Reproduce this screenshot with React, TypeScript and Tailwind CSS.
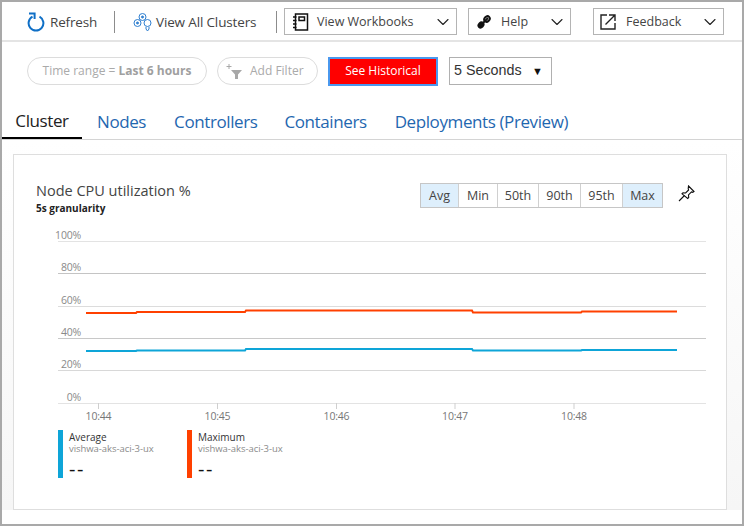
import { ChevronDown } from "lucide-react";

const FONT = "font-['Open_Sans','Noto_Sans',sans-serif]";

const GRID = [
  { label: "100%", y: 241, color: "#e3e3e3" },
  { label: "80%", y: 273, color: "#c4c4c4" },
  { label: "60%", y: 306, color: "#dcdcdc" },
  { label: "40%", y: 338, color: "#c8c8c8" },
  { label: "20%", y: 370, color: "#d8d8d8" },
  { label: "0%", y: 403, color: "#e3e3e3" },
];

const TICKS = [
  { label: "10:44", x: 98.5 },
  { label: "10:45", x: 217.5 },
  { label: "10:46", x: 336.5 },
  { label: "10:47", x: 455 },
  { label: "10:48", x: 574 },
];

const RED_LINE =
  "86,313 136,313 137,312 245,312 246,310.5 472,310.5 473,312.5 581,312.5 582,311.5 677,311.5";
const BLUE_LINE =
  "86,351 136,351 137,350.5 245,350.5 246,349 472,349 473,350.5 581,350.5 582,350 677,350";

const STATS = [
  { label: "Avg", active: true, width: "w-[38px]" },
  { label: "Min", active: false, width: "w-[39px]" },
  { label: "50th", active: false, width: "w-[41px]" },
  { label: "90th", active: false, width: "w-[42px]" },
  { label: "95th", active: false, width: "w-[42px]" },
  { label: "Max", active: true, width: "w-[39px]" },
];

const TABS = [
  { label: "Nodes", className: "ml-[15px]" },
  { label: "Controllers", className: "ml-[28px]" },
  { label: "Containers", className: "ml-[27px]" },
  { label: "Deployments (Preview)", className: "ml-[28px]" },
];

function RefreshIcon() {
  return (
    <svg width="18" height="20" viewBox="0 0 18 20" fill="none">
      <path d="M5.5 4.6A7.4 7.4 0 1 0 12.5 4.6" stroke="#0f6fc6" strokeWidth="2" />
      <path d="M2 1.5h5.6v5.6" stroke="#0f6fc6" strokeWidth="2" />
    </svg>
  );
}

function ClustersIcon() {
  return (
    <svg width="19" height="20" viewBox="0 0 19 20" fill="none" stroke="#2f7fd0" strokeWidth="1">
      <circle cx="9.5" cy="5" r="3.5" />
      <circle cx="4.5" cy="11" r="3.5" />
      <circle cx="14.5" cy="11" r="3.5" />
      <circle cx="9.5" cy="5" r="1" fill="#2f7fd0" />
      <circle cx="4.5" cy="11" r="1" fill="#2f7fd0" />
      <path d="M13 15v2l1.5 2 1.5-2v-2" />
    </svg>
  );
}

function WorkbookIcon() {
  return (
    <svg width="17" height="18" viewBox="0 0 17 18" fill="none" stroke="#111" strokeWidth="1.5">
      <path d="M3.5 1h12v16h-12z" />
      <path d="M7 4h5.5v3.5H7z" />
      <path d="M1 4h3.5M1 7.5h3.5M1 11h3.5M1 14.5h3.5" />
    </svg>
  );
}

function HelpIcon() {
  return (
    <svg width="14" height="14" viewBox="0 0 14 14" fill="none" stroke="#111">
      <path d="M3 11l8-8" strokeWidth="2" />
      <ellipse cx="10" cy="4" rx="3" ry="2.4" transform="rotate(-45 10 4)" strokeWidth="2" />
      <ellipse cx="4" cy="10" rx="3" ry="2.4" transform="rotate(-45 4 10)" fill="#111" strokeWidth="1.5" />
    </svg>
  );
}

function FeedbackIcon() {
  return (
    <svg width="16" height="16" viewBox="0 0 16 16" fill="none" stroke="#222" strokeWidth="1.4">
      <path d="M7 1H1v14h14V9" />
      <path d="M5.5 10.5L14.5 1.5M9 1h6v6" />
    </svg>
  );
}

function FilterIcon() {
  return (
    <svg width="17" height="17" viewBox="0 0 17 17" fill="#a8a8a8">
      <path d="M5 7h11l-4 4.4V16h-3v-4.6z" />
      <path d="M3 1v5M0.5 3.5h5" stroke="#a8a8a8" fill="none" />
    </svg>
  );
}

function PinIcon() {
  return (
    <svg width="17" height="17" viewBox="0 0 17 17" fill="none" stroke="#111" strokeWidth="1.1">
      <path d="M10.5 1L16 6.5l-1.2.8-1.3-.4-3 3 .2 2.6-1 1L4 8.8l1-1 2.6.2 3-3-.4-1.3z" />
      <path d="M6.5 10.5L1 16" />
    </svg>
  );
}

function Dropdown({
  icon,
  label,
  className,
  labelClass,
}: {
  icon: React.ReactNode;
  label: string;
  className: string;
  labelClass: string;
}) {
  return (
    <div className={`flex h-[27px] items-center border border-[#b4b4b4] pr-[3px] ${className}`}>
      {icon}
      <span className={`pt-[2px] text-[12.5px] text-[#444] ${labelClass}`}>{label}</span>
      <ChevronDown size={20} strokeWidth={1.3} className="ml-auto text-[#222]" />
    </div>
  );
}

function Chart() {
  return (
    <svg width="712" height="200" viewBox="14 226 712 200" className="block">
      {GRID.map((g) => (
        <g key={g.label}>
          <line x1="58" x2="706" y1={g.y + 0.5} y2={g.y + 0.5} stroke={g.color} />
          <text x="81" y={g.y - 2} textAnchor="end" fontSize="10.5" letterSpacing="-0.2" fill="#8a8a8a">
            {g.label}
          </text>
        </g>
      ))}
      {TICKS.map((t) => (
        <g key={t.label}>
          <line x1={t.x} x2={t.x} y1="403" y2="409" stroke="#cfcfcf" />
          <text x={t.x} y="420" textAnchor="middle" fontSize="10.5" letterSpacing="-0.2" fill="#777">
            {t.label}
          </text>
        </g>
      ))}
      <polyline points={RED_LINE} fill="none" stroke="#ff4000" strokeWidth="2" />
      <polyline points={BLUE_LINE} fill="none" stroke="#0ea5d8" strokeWidth="2" />
    </svg>
  );
}

function LegendItem({ color, title }: { color: string; title: string }) {
  return (
    <div className="flex h-[48px] w-[129px]">
      <div className={`h-full w-[5px] ${color}`} />
      <div className="ml-[6px] flex flex-col pt-[1px]">
        <span className="text-[10px] leading-[12px] text-[#333]">{title}</span>
        <span className="whitespace-nowrap text-[9.5px] leading-[11px] tracking-[-0.05px] text-[#8a8a8a]">
          vishwa-aks-aci-3-ux
        </span>
        <span className="mt-[4px] text-[20px] leading-[22px] tracking-[1.5px] text-[#111]">--</span>
      </div>
    </div>
  );
}

export default function App() {
  return (
    <div className={`h-[526px] w-[744px] overflow-hidden border-2 border-[#a9a9a9] bg-white ${FONT}`}>
      {/* Toolbar */}
      <div className="flex h-[40px] items-center border-b-2 border-[#e4e4e4] pl-[25px] pt-[1px]">
        <RefreshIcon />
        <span className="ml-[5px] w-[64px] pt-[1px] text-[13.5px] tracking-[-0.15px] text-[#444]">Refresh</span>
        <div className="h-[22px] w-px bg-[#8c8c8c]" />
        <div className="ml-[18px]">
          <ClustersIcon />
        </div>
        <span className="ml-[4px] w-[120px] pt-[1px] text-[13.5px] tracking-[-0.15px] text-[#444]">
          View All Clusters
        </span>
        <div className="h-[22px] w-px bg-[#8c8c8c]" />
        <Dropdown
          icon={<WorkbookIcon />}
          label="View Workbooks"
          className="ml-[7px] w-[173px] pl-[7px]"
          labelClass="ml-[8px]"
        />
        <Dropdown
          icon={<HelpIcon />}
          label="Help"
          className="ml-[11px] w-[103px] pl-[8px]"
          labelClass="ml-[10px]"
        />
        <Dropdown
          icon={<FeedbackIcon />}
          label="Feedback"
          className="ml-[22px] w-[131px] pl-[6px]"
          labelClass="ml-[10px]"
        />
      </div>

      {/* Filters */}
      <div className="flex h-[60px] items-center pb-[2px] pl-[25px]">
        <div className="flex h-[28px] w-[180px] items-center justify-center rounded-full border border-[#dcdcdc] text-[12px] text-[#aaa]">
          <span>Time range =&nbsp;</span>
          <span className="font-bold text-[#a0a0a0]">Last 6 hours</span>
        </div>
        <div className="ml-[10px] flex h-[28px] w-[101px] items-center rounded-full border border-[#dcdcdc] pl-[8px] text-[12px] text-[#aaa]">
          <FilterIcon />
          <span className="ml-[7px]">Add Filter</span>
        </div>
        <button className="ml-[10px] h-[29px] w-[110px] border-2 border-[#4a98ee] bg-[#ff0000] text-[12px] text-white">
          See Historical
        </button>
        <div className="ml-[11px] flex h-[28px] w-[103px] items-center justify-between border border-[#b0b0b0] pl-[4px] pr-[8px] text-[14.3px] text-[#333]">
          <span className="font-['Liberation_Sans',sans-serif]">5 Seconds</span>
          <span className="text-[11px] text-[#111]">▼</span>
        </div>
      </div>

      {/* Tabs */}
      <div className="flex h-[38px] border-b border-[#d4d4d4] text-[17px] tracking-[-0.4px]">
        <div className="flex w-[80px] items-center justify-center border-b-2 border-black pt-[2px] text-[#222]">
          Cluster
        </div>
        <div className="flex items-center pt-[2px] text-[#1f67b0]">
          {TABS.map((t) => (
            <span key={t.label} className={t.className}>
              {t.label}
            </span>
          ))}
        </div>
      </div>

      {/* Card */}
      <div className="h-[370px] bg-gradient-to-b from-white to-[#f6f6f6] pl-[11px] pr-[15px] pt-[14px]">
        <div className="h-[356px] border border-[#dedede] bg-white">
          <div className="flex h-[71px] pl-[22px] pt-[26px]">
            <div>
              <div className="text-[14.5px] leading-[20px] text-[#444]">Node CPU utilization %</div>
              <div className="text-[10px] font-bold leading-[14px] text-[#222]">5s granularity</div>
            </div>
            <div className="ml-auto mr-[31px] flex items-start">
              <div className="mt-[2px] flex h-[25px] border border-[#c6c6c6]">
                {STATS.map((s) => (
                  <div
                    key={s.label}
                    className={`flex items-center justify-center border-r border-[#d0d0d0] pt-[1px] text-[12.5px] text-[#444] last:border-r-0 ${s.width} ${
                      s.active ? "bg-[#deeffc]" : ""
                    }`}
                  >
                    {s.label}
                  </div>
                ))}
              </div>
              <div className="ml-[15px] mt-[4px]">
                <PinIcon />
              </div>
            </div>
          </div>
          <Chart />
          <div className="ml-[44px] mt-[4px] flex">
            <LegendItem color="bg-[#0ea5d8]" title="Average" />
            <LegendItem color="bg-[#ff4000]" title="Maximum" />
          </div>
        </div>
      </div>
    </div>
  );
}
